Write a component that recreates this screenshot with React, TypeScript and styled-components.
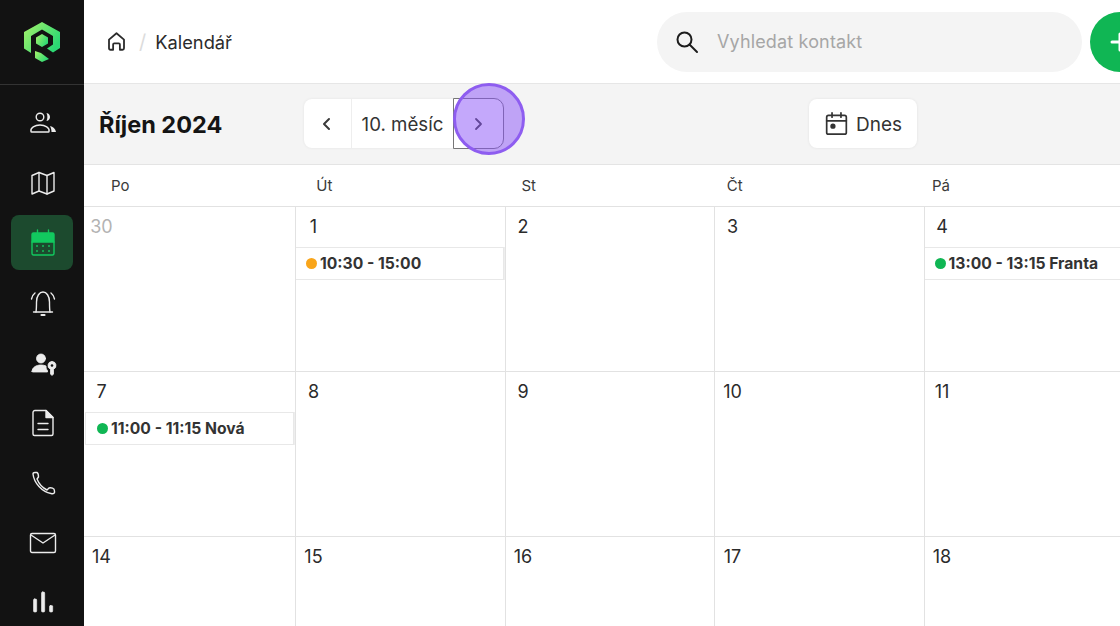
import { FC, ReactNode } from 'react';
import styled, { createGlobalStyle } from 'styled-components';

const GlobalStyle = createGlobalStyle`
  html, body {
    margin: 0;
    height: 100%;
    overflow: hidden;
    background: #fff;
  }
  body {
    font-family: Inter, "Liberation Sans", sans-serif;
    color: #2b2b2b;
  }
  * {
    box-sizing: border-box;
  }
`;

const Page = styled.div`
  width: 1120px;
  height: 626px;
  display: flex;
  overflow: hidden;
  position: relative;
`;

const Sidebar = styled.aside`
  width: 84px;
  flex: none;
  background: #121212;
  display: flex;
  flex-direction: column;
  align-items: center;
`;

const LogoBox = styled.div`
  width: 100%;
  height: 85px;
  flex: none;
  display: flex;
  align-items: center;
  justify-content: center;
  border-bottom: 1px solid #333;
`;

const NavList = styled.nav`
  display: flex;
  flex-direction: column;
  align-items: center;
  padding: 10px 1px 0 0;
`;

const NavItem = styled.div<{ $active?: boolean }>`
  width: 62px;
  height: 55px;
  margin-bottom: 5px;
  padding-left: 2px;
  flex: none;
  display: flex;
  align-items: center;
  justify-content: center;
  border-radius: 8px;
  color: ${p => (p.$active ? '#12c95f' : '#ececec')};
  background: ${p => (p.$active ? '#1c4a2e' : 'transparent')};
`;

const Main = styled.main`
  flex: 1;
  min-width: 0;
  display: flex;
  flex-direction: column;
`;

const TopBar = styled.header`
  height: 84px;
  flex: none;
  display: flex;
  align-items: center;
  padding-left: 22px;
  background: #fff;
  border-bottom: 1px solid #e6e6e6;
`;

const Crumbs = styled.div`
  display: flex;
  align-items: center;
  color: #2b2b2b;
  font-size: 18.3px;
  flex: none;
  width: 551px;
`;

const CrumbSep = styled.span`
  color: #dcdcdc;
  margin: 0 9px 0 12px;
  font-size: 20px;
`;

const SearchBox = styled.div`
  width: 425px;
  height: 60px;
  flex: none;
  display: flex;
  align-items: center;
  gap: 17px;
  padding-left: 17px;
  border-radius: 30px;
  background: #f4f4f4;
  color: #a6a6a6;
  font-size: 18px;
  letter-spacing: 0.15px;
`;

const AddButton = styled.div`
  width: 60px;
  height: 60px;
  flex: none;
  margin-left: 8px;
  border-radius: 50%;
  background: #10b654;
  color: #fff;
  display: flex;
  align-items: center;
  padding-left: 17.5px;
`;

const Toolbar = styled.div`
  height: 81px;
  flex: none;
  display: flex;
  align-items: center;
  padding-left: 15px;
  padding-bottom: 1px;
  background: #f4f4f4;
  border-bottom: 1px solid #e4e4e4;
`;

const MonthTitle = styled.h1`
  width: 205px;
  margin: 0;
  padding-top: 1px;
  flex: none;
  font-size: 23.5px;
  font-weight: 700;
  color: #141414;
`;

const Pager = styled.div`
  width: 199px;
  height: 49px;
  flex: none;
  display: flex;
  border-radius: 8px;
  background: #fff;
  box-shadow: 0 0 3px rgba(0, 0, 0, 0.07);
`;

const PagerArrow = styled.div`
  width: 47px;
  padding-right: 2px;
  flex: none;
  display: flex;
  align-items: center;
  justify-content: center;
  color: #3a3a3a;
`;

const PagerLabel = styled.div`
  width: 102px;
  padding-top: 1px;
  flex: none;
  display: flex;
  align-items: center;
  justify-content: center;
  border-left: 1px solid #eee;
  font-size: 18.7px;
  color: #333;
`;

const PagerNext = styled.div`
  flex: 1;
  position: relative;
  display: flex;
  align-items: center;
  justify-content: center;
  color: #3a3a3a;
`;

const TodayButton = styled.div`
  width: 108px;
  height: 49px;
  margin-left: 306px;
  flex: none;
  display: flex;
  align-items: center;
  justify-content: center;
  gap: 7px;
  border-radius: 8px;
  background: #fff;
  box-shadow: 0 0 3px rgba(0, 0, 0, 0.08);
  font-size: 19px;
  color: #333;
`;

const TodayLabel = styled.span`
  padding-top: 1px;
`;

const Weekdays = styled.div`
  height: 42px;
  flex: none;
  display: grid;
  grid-template-columns: repeat(5, 205.25px);
  border-bottom: 1px solid #e2e2e2;
  background: #fff;
`;

const Weekday = styled.div`
  display: flex;
  align-items: center;
  padding-left: 27px;
  padding-bottom: 1px;
  font-size: 15px;
  color: #3a3a3a;
`;

const Calendar = styled.div`
  flex: 1;
  display: grid;
  grid-template-columns: 212px repeat(4, 209.5px);
  grid-auto-rows: 165px;
  background: #fff;
`;

const Day = styled.div`
  border-right: 1px solid #e2e2e2;
  border-bottom: 1px solid #e2e2e2;
  display: flex;
  flex-direction: column;
  align-items: stretch;
`;

const DayNumber = styled.div<{ $muted?: boolean }>`
  height: 40px;
  width: 35px;
  padding-top: 9px;
  text-align: center;
  font-size: 18px;
  line-height: 22px;
  color: ${p => (p.$muted ? '#b3b3b3' : '#2b2b2b')};
`;

const Event = styled.div<{ $first?: boolean }>`
  height: 33px;
  margin-right: 1px;
  margin-left: ${p => (p.$first ? '1px' : '0')};
  display: flex;
  align-items: center;
  gap: 3px;
  padding-left: ${p => (p.$first ? '11px' : '10px')};
  border: 1px solid #e8e8e8;
  border-left: ${p => (p.$first ? '1px solid #e8e8e8' : 'none')};
  box-shadow: 1px 0 0 #eee;
  font-size: 15.7px;
  font-weight: 700;
  color: #333;
  white-space: nowrap;
`;

const Dot = styled.span<{ $color: string }>`
  width: 11px;
  height: 11px;
  flex: none;
  border-radius: 50%;
  background: ${p => p.$color};
`;

const FocusFrame = styled.div`
  position: absolute;
  left: 453px;
  top: 98px;
  width: 51px;
  height: 51px;
  border: 1px solid #777;
  border-radius: 0 10px 10px 0;
  pointer-events: none;
`;

const ClickMarker = styled.div`
  position: absolute;
  left: 453px;
  top: 83px;
  width: 72px;
  height: 72px;
  border-radius: 50%;
  background: rgba(138, 82, 247, 0.5);
  border: 3px solid #8e5df0;
  pointer-events: none;
`;

const Icon: FC<{ size?: number; width?: number; fill?: string; children: ReactNode }> = ({ size = 28, width = 1.4, fill = 'none', children }) => (
  <svg width={size} height={size} viewBox="0 0 28 28" fill={fill} stroke="currentColor" strokeWidth={width} strokeLinecap="round" strokeLinejoin="round">
    {children}
  </svg>
);

const Logo = () => (
  <svg width="38" height="42" viewBox="0 0 38 42">
    <defs>
      <linearGradient id="logoGrad" x1="0" y1="0" x2="1" y2="0.6">
        <stop offset="0" stopColor="#a8f26a" />
        <stop offset="1" stopColor="#2bd873" />
      </linearGradient>
    </defs>
    <path fill="url(#logoGrad)" d="M19 1 L37 11 V27 L30 31.500 L24 27.500 L30 23.500 V15 L19 8.500 L8 15 V32 L1 27.500 V11 Z" />
    <path fill="url(#logoGrad)" d="M19 13 L25 16.500 V22.500 L19 26 L13 22.500 V16.500 Z" />
    <path fill="url(#logoGrad)" d="M12 30 L18 32 L26 38 L19 41 L12 37 Z" />
  </svg>
);

const days: { n: number; muted?: boolean; event?: { color: string; text: string } }[] = [
  { n: 30, muted: true },
  { n: 1, event: { color: '#f9a51a', text: '10:30 - 15:00' } },
  { n: 2 },
  { n: 3 },
  { n: 4, event: { color: '#10b654', text: '13:00 - 13:15 Franta' } },
  { n: 7, event: { color: '#10b654', text: '11:00 - 11:15 Nová' } },
  { n: 8 },
  { n: 9 },
  { n: 10 },
  { n: 11 },
  { n: 14 },
  { n: 15 },
  { n: 16 },
  { n: 17 },
  { n: 18 },
];

const weekdays = ['Po', 'Út', 'St', 'Čt', 'Pá'];

const App: FC = () => (
  <Page>
    <GlobalStyle />
    <Sidebar>
      <LogoBox><Logo /></LogoBox>
      <NavList>
        <NavItem>
          <Icon>
            <circle cx="11" cy="8" r="3.800" />
            <path d="M2 22.500c-1-3.500 4-6.500 9-6.500s10 3 9 6.500c0 .3-.3.5-.7.5H2.700c-.4 0-.7-.2-.7-.5z" />
            <path d="M17.500 4c2.500.5 3.500 2.200 3.500 4s-1 3.500-3.500 4c1.200-2.500 1.200-5.500 0-8z" fill="currentColor" stroke="none" />
            <path d="M21 17c3 .5 5.500 3 6 6h-4.500c0-2-.5-4.200-1.500-6z" fill="currentColor" stroke="none" />
          </Icon>
        </NavItem>
        <NavItem>
          <Icon>
            <path d="M3 6.500 10 3.500 18 6.500 25 3.500V22L18 25 10 22 3 25z" />
            <path d="M10 3.500V22M18 6.500V25" />
          </Icon>
        </NavItem>
        <NavItem $active>
          <Icon>
            <path d="M3 13V5.500C3 4.500 3.500 4 4.500 4h19c1 0 1.500.5 1.500 1.500V13z" fill="currentColor" />
            <path d="M3 13v11.500c0 1 .5 1.500 1.500 1.500h19c1 0 1.500-.5 1.500-1.500V13" />
            <path d="M8.500 1v4M19.500 1v4" />
            <path d="M8 17h.01M14 17h.01M20 17h.01M8 22h.01M14 22h.01M20 22h.01" strokeWidth="1.800" />
          </Icon>
        </NavItem>
        <NavItem>
          <Icon>
            <path d="M7 23c.5-3 .5-6 .5-10C7.500 7 10.500 3 14 3s6.500 4 6.500 10c0 4 0 7 .5 10" />
            <path d="M4.500 23h19" />
            <path d="M12.500 26h3" strokeWidth="2.200" />
            <path d="M2.500 10c.5-2.500 1.500-4.500 3.500-6M25.500 10c-.5-2.500-1.500-4.500-3.500-6" />
          </Icon>
        </NavItem>
        <NavItem>
          <Icon fill="currentColor" width={0.8}>
            <circle cx="12" cy="9.500" r="4.500" />
            <path d="M3 22.500c0-4 4-6.500 9-6.500 2 0 3.500.3 5 1 0 2 .5 3.500 1.500 4.500v1.500H4c-.7 0-1-.2-1-.5z" />
            <path d="M23 12.500a4 4 0 0 1 1.500 7.700V25l-1.500 1.500-1.500-1.500v-4.800A4 4 0 0 1 23 12.500z" />
            <circle cx="23" cy="16.500" r="1.300" fill="#121212" stroke="none" />
          </Icon>
        </NavItem>
        <NavItem>
          <Icon>
            <path d="M6 1.500h11l7 7V25c0 1-.5 1.500-1.500 1.500h-17C4.500 26.500 4 26 4 25V3.500C4 2 5 1.500 6 1.500z" />
            <path d="M17 1.500V8.500h7z" fill="currentColor" />
            <path d="M9 14.500h10M9 20.500h10" />
          </Icon>
        </NavItem>
        <NavItem>
          <Icon>
            <path d="M4 5C4 4 5 3.500 6 3.500h2C9 4 9.500 6 9.500 8L8 10c2 5 6 9 10 11l2-2c2-.5 5.500 0 5.500 3v1.500c-.5 1.500-1.500 1.500-3.500 1C13 23 5 14 4 5z" />
          </Icon>
        </NavItem>
        <NavItem>
          <Icon>
            <rect x="1.500" y="4.500" width="25" height="19" rx="1.500" />
            <path d="M2 6 14 14 26 6" />
          </Icon>
        </NavItem>
        <NavItem>
          <Icon fill="currentColor" width={0.6}>
            <rect x="4.500" y="10" width="3.200" height="13" rx="1" />
            <rect x="12.500" y="3" width="3.200" height="20" rx="1" />
            <rect x="20.500" y="16.500" width="3.200" height="6.500" rx="1" />
          </Icon>
        </NavItem>
      </NavList>
    </Sidebar>
    <Main>
      <TopBar>
        <Crumbs>
          <Icon size={21} width={2.4}>
            <path d="M4 11.500 14 3l10 8.500V23c0 1.200-.8 2-2 2h-3.500v-7c0-1-.5-1.500-1.500-1.500h-6c-1 0-1.500.5-1.500 1.500v7H6c-1.200 0-2-.8-2-2z" />
          </Icon>
          <CrumbSep>/</CrumbSep>
          Kalendář
        </Crumbs>
        <SearchBox>
          <svg width="26" height="26" viewBox="0 0 26 26" fill="none" stroke="#1c1c1c" strokeWidth="2" strokeLinecap="round">
            <circle cx="10.500" cy="10.500" r="7" />
            <path d="M15.500 15.500 23 23" />
          </svg>
          Vyhledat kontakt
        </SearchBox>
        <AddButton>
          <svg width="24" height="24" viewBox="0 0 24 24" fill="none" stroke="currentColor" strokeWidth="3" strokeLinecap="round">
            <path d="M12 4v16M4 12h16" />
          </svg>
        </AddButton>
      </TopBar>
      <Toolbar>
        <MonthTitle>Říjen 2024</MonthTitle>
        <Pager>
          <PagerArrow>
            <svg width="18" height="18" viewBox="0 0 18 18" fill="none" stroke="currentColor" strokeWidth="2" strokeLinecap="round" strokeLinejoin="round">
              <path d="M11 4 6 9l5 5" />
            </svg>
          </PagerArrow>
          <PagerLabel>10. měsíc</PagerLabel>
          <PagerNext>
            <svg width="18" height="18" viewBox="0 0 18 18" fill="none" stroke="currentColor" strokeWidth="1.800" strokeLinecap="round" strokeLinejoin="round">
              <path d="M7 4l5 5-5 5" />
            </svg>
          </PagerNext>
        </Pager>
        <TodayButton>
          <Icon size={25} width={1.9}>
            <rect x="3" y="5" width="22" height="21" rx="2" />
            <path d="M3 11h22M9 2v5M19 2v5" />
            <circle cx="10" cy="17" r="2" fill="currentColor" />
          </Icon>
          <TodayLabel>Dnes</TodayLabel>
        </TodayButton>
      </Toolbar>
      <Weekdays>
        {weekdays.map(d => <Weekday key={d}>{d}</Weekday>)}
      </Weekdays>
      <Calendar>
        {days.map((d, i) => (
          <Day key={d.n}>
            <DayNumber $muted={d.muted}>{d.n}</DayNumber>
            {d.event && (
              <Event $first={i % 5 === 0}>
                <Dot $color={d.event.color} />
                {d.event.text}
              </Event>
            )}
          </Day>
        ))}
      </Calendar>
    </Main>
    <FocusFrame />
    <ClickMarker />
  </Page>
);

export default App;
